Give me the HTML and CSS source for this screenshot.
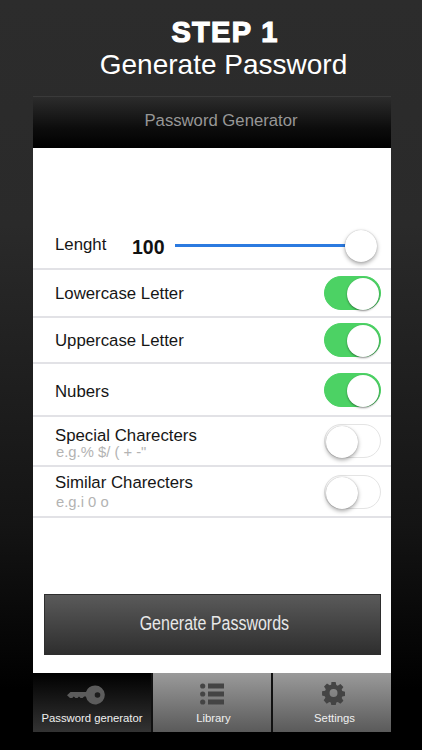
FILE: index.html
```html
<!DOCTYPE html>
<html lang="en">
<head>
<meta charset="utf-8">
<title>Generate Password</title>
<link rel="stylesheet" href="styles.css">
</head>
<body>
<header class="promo">
  <h1 class="promo-step">STEP 1</h1>
  <p class="promo-sub">Generate Password</p>
</header>
<main class="phone">
  <div class="navbar">Password Generator</div>
  <section class="content">
    <div class="rows">
      <div class="row row-length">
        <span class="label label-length">Lenght</span>
        <span class="value">100</span>
        <div class="slider"><span class="track"></span><span class="knob knob-slider"></span></div>
      </div>
      <div class="row row-a"><span class="label">Lowercase Letter</span><span class="switch on"><span class="knob"></span></span></div>
      <div class="row row-b"><span class="label">Uppercase Letter</span><span class="switch on"><span class="knob"></span></span></div>
      <div class="row row-c"><span class="label label-low">Nubers</span><span class="switch on"><span class="knob"></span></span></div>
      <div class="row row-d"><div class="stack"><span class="label">Special Charecters</span><span class="hint">e.g.% $/ ( + -"</span></div><span class="switch"><span class="knob"></span></span></div>
      <div class="row row-e"><div class="stack"><span class="label">Similar Charecters</span><span class="hint">e.g.i 0 o</span></div><span class="switch"><span class="knob"></span></span></div>
    </div>
    <button class="generate"><span class="generate-text">Generate Passwords</span></button>
  </section>
  <nav class="tabs">
    <div class="tab active">
      <svg class="icon icon-key" width="38" height="20" viewBox="0 0 38 20"><path fill="#5c5c5c" d="M28 .5a9.500 9.500 0 0 0-9 6.500H3.500L0 10.300 3 13h2.200l1.600-1.500L8.500 13h2l1.500-1.500 1.600 1.500h2l1.600-1.500h1.700A9.500 9.500 0 1 0 28 .5z"/><circle cx="30.500" cy="10" r="2.800" fill="#1c1c1c"/></svg>
      <span class="tab-label">Password generator</span>
    </div>
    <div class="tab">
      <svg class="icon" width="24" height="22" viewBox="0 0 24 22"><g fill="#444"><circle cx="2.700" cy="3" r="2.600"/><circle cx="2.700" cy="11" r="2.600"/><circle cx="2.700" cy="19" r="2.600"/><rect x="8" y="0.500" width="16" height="5"/><rect x="8" y="8.500" width="16" height="5"/><rect x="8" y="16.500" width="16" height="5"/></g></svg>
      <span class="tab-label label-library">Library</span>
    </div>
    <div class="tab">
      <svg class="icon icon-gear" width="23" height="23" viewBox="0 0 24 24"><path fill="#444" fill-rule="evenodd" d="M9.600 0h4.800l.7 3.500 1.700.7 3-2 3.400 3.400-2 3 .7 1.700 3.500.7v4.800l-3.500.7-.7 1.700 2 3-3.400 3.400-3-2-1.700.7-.7 3.500H9.600l-.7-3.500-1.700-.7-3 2L.8 20.800l2-3-.7-1.700L-1 15.400v-4.800l3.500-.7.7-1.700-2-3 3.400-3.400 3 2 1.700-.7zM12 8a4.500 4.500 0 1 0 0 9 4.500 4.500 0 0 0 0-9z" transform="translate(1 0) scale(.92)"/></svg>
      <span class="tab-label label-settings">Settings</span>
    </div>
  </nav>
</main>
</body>
</html>
```
FILE: styles.css
```css
* { box-sizing: border-box; }
html, body { margin: 0; height: 100%; }
body {
  width: 422px;
  height: 750px;
  overflow: hidden;
  font-family: "Liberation Sans", Arial, sans-serif;
  background: linear-gradient(180deg, #2c2c2c 0%, #2a2a2a 30%, #141414 70%, #000 92%);
}
.promo { height: 96px; padding: 17px 0 0 25px; text-align: center; color: #fff; }
.promo-step {
  margin: 0 0 0 3px;
  font-size: 29px;
  line-height: 30px;
  font-weight: 700;
  letter-spacing: 1.300px;
  -webkit-text-stroke: 1.200px #fff;
}
.promo-sub { margin: 2px 0 0; font-size: 28px; line-height: 32px; }
.phone { width: 358px; margin-left: 33px; display: flex; flex-direction: column; }
.navbar {
  height: 52px;
  padding: 14px 0 0 18px;
  text-align: center;
  font-size: 16.700px;
  line-height: 20px;
  color: #979797;
  border-top: 1px solid #3a3a3a;
  background: linear-gradient(180deg, #2c2c2c 0%, #0c0c0c 62%, #000 100%);
}
.content { height: 525px; background: #fff; display: flex; flex-direction: column; padding-top: 73px; }
.rows { display: flex; flex-direction: column; }
.row {
  display: flex;
  align-items: center;
  justify-content: space-between;
  padding: 0 10px 0 22px;
  border-bottom: 2px solid #e2e2e6;
}
.row-length { height: 49px; padding: 2px 14px 0 22px; justify-content: flex-start; }
.row-a { height: 48px; }
.row-b { height: 46px; }
.row-c { height: 53px; }
.row-d { height: 50px; }
.row-e { height: 51px; }
.label { font-size: 16.800px; line-height: 19px; color: #161616; }
.label-length { width: 77px; margin-top: -3px; }
.label-low { margin-top: 4px; }
.value { width: 43px; margin-top: 4px; font-size: 19.500px; font-weight: 700; color: #111; }
.slider { flex: 1; display: flex; align-items: center; position: relative; height: 32px; }
.track { flex: 1; height: 2.500px; background: #2b7ae0; margin-right: 16px; }
.knob-slider { position: absolute; right: 0; top: 0; }
.knob {
  display: block;
  width: 32px;
  height: 32px;
  border-radius: 50%;
  background: #fff;
  box-shadow: 0 2px 4px rgba(0, 0, 0, .35), 0 0 1px rgba(0, 0, 0, .3);
}
.switch {
  width: 57px;
  height: 34px;
  flex: none;
  padding: 1px;
  border-radius: 17px;
  border: 1px solid #e4e4e4;
  background: #fff;
  display: flex;
  justify-content: flex-start;
}
.switch.on { background: #4cd264; border-color: #4cd264; justify-content: flex-end; }
.switch.on .knob { box-shadow: 0 1px 2px rgba(0, 0, 0, .45); }
.stack { display: flex; flex-direction: column; }
.row-d .stack { margin-top: 4px; }
.row-e .stack { margin-top: -1px; }
.row-e .hint { margin-top: 3px; }
.hint { font-size: 14.800px; line-height: 15px; color: #b3b3b3; margin-left: 1px; }
.generate {
  align-self: flex-start;
  width: 337px;
  height: 61px;
  margin: 76px 0 0 11px;
  padding: 0 0 3px 4px;
  border: 1px solid #2e2e2e;
  font-family: inherit;
  font-size: 20px;
  color: #e8e8e8;
  background: linear-gradient(180deg, #5a5a5a 0%, #2e2e2e 100%);
}
.generate-text { display: inline-block; transform: scaleX(.8); white-space: nowrap; }
.tabs { height: 59px; display: flex; gap: 2px; background: #111; }
.tab {
  flex: 1;
  display: flex;
  flex-direction: column;
  align-items: center;
  justify-content: flex-end;
  padding-bottom: 6px;
  background: linear-gradient(180deg, #9a9a9a 0%, #5a5a5a 100%);
}
.tab.active { background: linear-gradient(180deg, #000 0%, #333 100%); }
.icon { margin-bottom: 6px; }
.icon-key { margin-right: 13px; }
.icon-gear { margin-left: 3px; }
.tab-label { font-size: 11.300px; line-height: 15px; color: #f0f0f0; }
.label-library { margin-left: 3px; }
.label-settings { margin-left: 5px; }
```
